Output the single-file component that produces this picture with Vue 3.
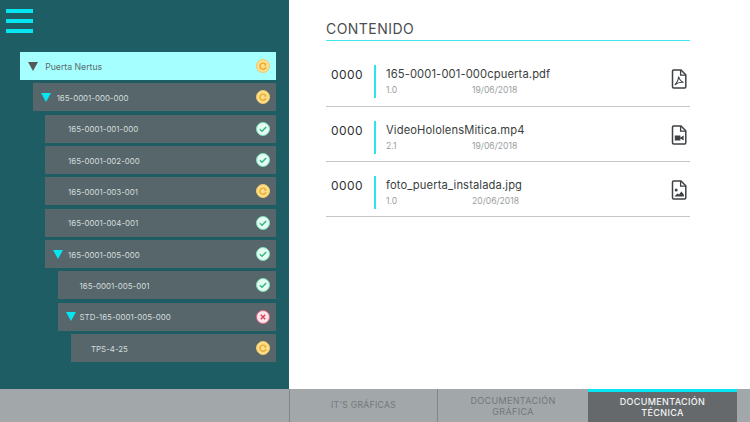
<script setup>
const nodes = [
  { label: 'Puerta Nertus', level: 0, open: true, state: 'wait', selected: true },
  { label: '165-0001-000-000', level: 1, open: true, state: 'wait' },
  { label: '165-0001-001-000', level: 2, state: 'ok' },
  { label: '165-0001-002-000', level: 2, state: 'ok' },
  { label: '165-0001-003-001', level: 2, state: 'wait' },
  { label: '165-0001-004-001', level: 2, state: 'ok' },
  { label: '165-0001-005-000', level: 2, open: true, state: 'ok' },
  { label: '165-0001-005-001', level: 3, state: 'ok' },
  { label: 'STD-165-0001-005-000', level: 3, open: true, state: 'bad' },
  { label: 'TPS-4-25', level: 4, state: 'wait' }
]

const docs = [
  { num: '0000', name: '165-0001-001-000cpuerta.pdf', version: '1.0', date: '19/06/2018', type: 'pdf' },
  { num: '0000', name: 'VideoHololensMitica.mp4', version: '2.1', date: '19/06/2018', type: 'video' },
  { num: '0000', name: 'foto_puerta_instalada.jpg', version: '1.0', date: '20/06/2018', type: 'image' }
]

const tabs = [
  { label: "IT'S GRÁFICAS" },
  { label: 'DOCUMENTACIÓN GRÁFICA' },
  { label: 'DOCUMENTACIÓN TÉCNICA', active: true }
]
</script>

<template>
  <div class="screen">
    <div class="main">
      <aside class="sidebar">
        <div class="burger"><span></span><span></span><span></span></div>
        <div class="tree">
          <div
            v-for="node in nodes"
            :key="node.label"
            class="node"
            :class="{ selected: node.selected }"
            :style="{ marginLeft: node.level * 12.7 + 'px' }"
          >
            <span
              class="arrow"
              :class="{ hidden: !node.open }"
              :style="{ marginRight: 7.2 - node.level * 1.25 + 'px' }"
            ></span>
            <span class="node-label">{{ node.label }}</span>
            <span class="status" :class="node.state">
              <svg v-if="node.state === 'ok'" viewBox="0 0 14 14" width="14" height="14">
                <path d="M3.8 7.2 6 9.3 10.2 5" fill="none" stroke="#35b58a" stroke-width="1.5" />
              </svg>
              <svg v-else-if="node.state === 'bad'" viewBox="0 0 14 14" width="14" height="14">
                <path d="M4.8 4.8 9.2 9.2M9.2 4.8 4.8 9.2" fill="none" stroke="#e0405f" stroke-width="1.5" />
              </svg>
              <svg v-else viewBox="0 0 14 14" width="14" height="14">
                <path d="M9.4 5.2A3.1 3.1 0 1 0 10 8" fill="none" stroke="#eda92c" stroke-width="1.4" />
                <path d="M7.8 6.6 10.4 6.8 10.2 4.2Z" fill="#eda92c" />
              </svg>
            </span>
          </div>
        </div>
      </aside>

      <section class="content">
        <h1 class="title">CONTENIDO</h1>
        <div v-for="doc in docs" :key="doc.name" class="doc">
          <div class="doc-num">{{ doc.num }}</div>
          <div class="doc-info">
            <div class="doc-name">{{ doc.name }}</div>
            <div class="doc-meta">
              <span class="doc-version">{{ doc.version }}</span>
              <span>{{ doc.date }}</span>
            </div>
          </div>
          <svg class="doc-icon" viewBox="0 0 16 20" width="16" height="20">
            <path d="M1.5 2.2Q1.5 1 2.7 1H10L14.8 5.8V17.8Q14.8 19 13.6 19H2.7Q1.5 19 1.5 17.8Z" fill="none" stroke="#3d4144" stroke-width="1.5" />
            <path d="M9.6 1V6.2H14.8" fill="none" stroke="#3d4144" stroke-width="1.3" />
            <path v-if="doc.type === 'pdf'" d="M7.6 7.5C7.4 10.5 6 13.8 3.8 15.8 6.2 14 9.4 13 12.4 13.4 10.2 12.4 8.2 10.2 7.6 7.5Z" fill="none" stroke="#3d4144" stroke-width="1.1" />
            <path v-if="doc.type === 'video'" d="M3.8 10.5H9.4V15.5H3.8ZM9.4 12.4 12.6 10.5V15.5L9.4 13.6Z" fill="#3d4144" />
            <template v-if="doc.type === 'image'">
              <circle cx="5.2" cy="10" r="1.5" fill="#3d4144" />
              <path d="M3.4 16.4 6.4 13.4 8 14.6 10.4 11.4 12.8 14.4V16.4Z" fill="#3d4144" />
            </template>
          </svg>
        </div>
      </section>
    </div>

    <nav class="tabs">
      <div class="tabs-spacer"></div>
      <div v-for="tab in tabs" :key="tab.label" class="tab" :class="{ active: tab.active }">
        <span>{{ tab.label }}</span>
      </div>
      <div class="tabs-end"></div>
    </nav>
  </div>
</template>

<style>
html, body {
  margin: 0;
  background: #fff;
}
</style>

<style scoped>
.screen {
  width: 750px;
  height: 422px;
  display: flex;
  flex-direction: column;
  overflow: hidden;
  font-family: Inter, "Open Sans", sans-serif;
}
.main {
  flex: 1;
  display: flex;
  min-height: 0;
}
.sidebar {
  width: 289px;
  box-sizing: border-box;
  background: #1f5d64;
  padding: 9px 13px 0 6px;
}
.burger {
  width: 27px;
  height: 24px;
  display: flex;
  flex-direction: column;
  justify-content: space-between;
}
.burger span {
  height: 4px;
  background: #05e6f2;
}
.tree {
  margin-top: 19px;
  margin-left: 14px;
  display: flex;
  flex-direction: column;
  gap: 3.35px;
}
.node {
  height: 28px;
  background: #56666a;
  display: flex;
  align-items: center;
  padding: 0 6px 0 8px;
  color: #d4dcdc;
  font-size: 7.9px;
}
.node.selected {
  background: #a6ffff;
  color: #5d6a6d;
  font-size: 8.7px;
}
.arrow {
  width: 0;
  height: 0;
  border-left: 5px solid transparent;
  border-right: 5px solid transparent;
  border-top: 9px solid #05e6f2;
  flex: none;
}
.arrow.hidden {
  border-top-color: transparent;
}
.selected .arrow {
  border-top-color: #56595c;
}
.node-label {
  flex: 1;
  padding-top: 1px;
  white-space: nowrap;
}
.status {
  width: 14px;
  height: 14px;
  border-radius: 50%;
  display: flex;
  flex: none;
  box-sizing: border-box;
  align-items: center;
  justify-content: center;
  border: 1px solid transparent;
}
.status.ok {
  background: #e4fbf2;
  border-color: #7fe0bd;
}
.status.wait {
  background: #fbdf8e;
  border-color: #f3c862;
}
.status.bad {
  background: #fbe6ea;
  border-color: #e2607f;
}
.status svg {
  flex: none;
}
.content {
  flex: 1;
  box-sizing: border-box;
  padding: 20px 60px 0 37px;
  background: #fff;
}
.title {
  margin: 0;
  padding-bottom: 2px;
  border-bottom: 1.5px solid #3fe6ee;
  font-size: 14px;
  line-height: 18px;
  font-weight: 400;
  letter-spacing: 0.45px;
  color: #4a4e50;
}
.doc {
  height: 55px;
  box-sizing: border-box;
  display: flex;
  align-items: flex-start;
  padding-top: 14px;
  border-bottom: 1px solid #c6c6c6;
  color: #35393b;
}
.doc:first-of-type {
  height: 66px;
  padding-top: 24px;
}
.doc-num {
  width: 48px;
  box-sizing: border-box;
  padding: 2px 0 0 5px;
  font-size: 12px;
  line-height: 16px;
  letter-spacing: 0.4px;
  color: #2e3133;
}
.doc-info {
  flex: 1;
  height: 33px;
  box-sizing: border-box;
  border-left: 2.5px solid #2fe3ee;
  padding: 2px 0 0 10px;
}
.doc-name {
  font-size: 11.2px;
  line-height: 15px;
  letter-spacing: 0.12px;
  color: #3a3e40;
}
.doc-meta {
  display: flex;
  margin-top: 2px;
  font-size: 8.6px;
  line-height: 12px;
  color: #9a9e9f;
}
.doc-version {
  width: 86px;
}
.doc-icon {
  flex: none;
  margin: 4px 3px 0 0;
}
.tabs {
  height: 33px;
  flex: none;
  display: grid;
  grid-template-columns: 289px 148px 151px 149px 1fr;
  background: #a2a7a9;
}
.tab {
  box-sizing: border-box;
  display: flex;
  align-items: center;
  justify-content: center;
  border-left: 1px solid #7f8588;
  padding: 0 20px;
  text-align: center;
  font-size: 9px;
  line-height: 11px;
  letter-spacing: 0.35px;
  color: #72787b;
}
.tabs-spacer + .tab {
  font-size: 8.6px;
  letter-spacing: 0.3px;
}
.tab.active {
  background: #66696c;
  border-left: 0;
  border-top: 3px solid #05e6f2;
  color: #f2f4f4;
  font-weight: 500;
}
</style>
